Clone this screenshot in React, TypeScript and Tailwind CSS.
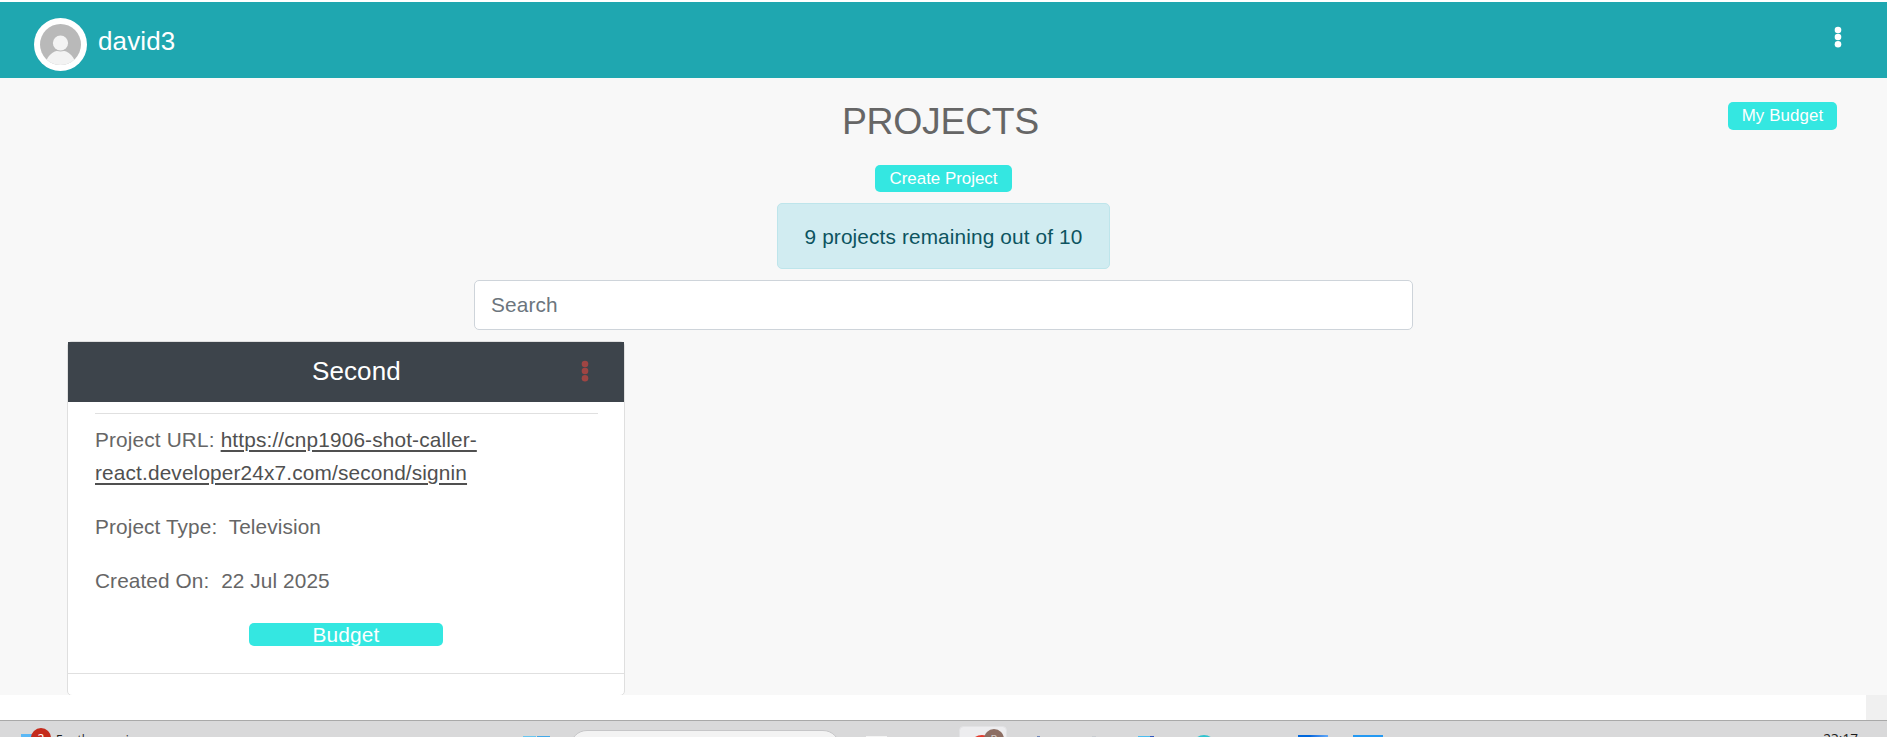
import React from "react";

function Dots({ className }: { className: string }) {
  return (
    <svg viewBox="0 0 8 22" className={`h-[22px] w-2 shrink-0 ${className}`} fill="currentColor">
      <circle cx="4" cy="4" r="3.3" />
      <circle cx="4" cy="11" r="3.3" />
      <circle cx="4" cy="18.2" r="3.3" />
    </svg>
  );
}

function Avatar() {
  return (
    <svg viewBox="0 0 53 53" className="size-[53px] shrink-0">
      <defs>
        <clipPath id="face">
          <circle cx="26.5" cy="26.5" r="20.5" />
        </clipPath>
      </defs>
      <circle cx="26.5" cy="26.5" r="26.5" fill="#fff" />
      <g clipPath="url(#face)">
        <rect width="53" height="53" fill="#b9b9b9" />
        <circle cx="26.5" cy="47.5" r="15" fill="#f3f3f3" />
        <circle cx="26.5" cy="25" r="8.6" fill="#b9b9b9" />
        <circle cx="26.5" cy="25" r="7.6" fill="#f3f3f3" />
      </g>
    </svg>
  );
}

function Header() {
  return (
    <header className="flex h-[76px] shrink-0 items-start bg-[#1fa7b0] pl-[34px] pr-[45px] text-white">
      <div className="pt-4">
        <Avatar />
      </div>
      <span className="ml-[11px] mt-[19px] text-[26px] leading-[40px] tracking-[0.12px]">david3</span>
      <Dots className="ml-auto mt-6 text-white" />
    </header>
  );
}

function ProjectCard() {
  return (
    <article className="ml-[67px] mt-[11px] h-[355px] w-[558px] shrink-0 rounded-[5px] border border-[#dfdfdf] bg-white">
      <div className="flex h-[60px] items-center bg-[#3d444b] pb-[2px] pr-[35px]">
        <h2 className="ml-[244px] text-[26px] leading-[40px] tracking-[0.1px] text-white">Second</h2>
        <Dots className="ml-auto text-[#9f4543]" />
      </div>
      <div className="pl-[27px] pr-[26px] text-[20.8px] leading-[33px] tracking-[0.15px] text-[#666]">
        <hr className="mb-[9px] mt-[11px] border-[#e0e0e0]" />
        <p>
          Project URL:{" "}
          <a className="text-[#505050] underline decoration-2 underline-offset-[3px]">
            https://cnp1906-shot-caller-
            <br />
            react.developer24x7.com/second/signin
          </a>
        </p>
        <p className="mt-[21px] tracking-[0.1px]">Project Type:&nbsp; Television</p>
        <p className="mt-[21px] tracking-[0.1px]">Created On:&nbsp; 22 Jul 2025</p>
        <button className="ml-[154px] mt-[26px] flex h-[23px] w-[194px] items-center justify-center rounded-[5px] bg-[#34e7e1] text-[20.8px] leading-[23px] text-white">
          Budget
        </button>
      </div>
      <div className="mt-[27px] border-t border-[#e0e0e0]" />
    </article>
  );
}

function Taskbar() {
  return (
    <footer className="flex h-[17px] shrink-0 items-start overflow-hidden border-t border-[#a9a9a9] bg-[#d9d9da]">
      <svg className="ml-[20px] h-4 w-8 shrink-0" viewBox="0 0 32 16">
        <rect x="1" y="13" width="14" height="3" fill="#5bb8f5" />
        <circle cx="21" cy="17" r="10" fill="#c42b1c" />
        <text x="21" y="22" fontSize="12" fill="#fff" textAnchor="middle" fontFamily="Noto Sans">
          2
        </text>
      </svg>
      <span className="ml-[4px] mt-[11px] w-[110px] shrink-0 whitespace-nowrap font-['Open_Sans',sans-serif] text-[12px] leading-4 text-[#1c1c1c]">
        For the evening
      </span>
      <div className="ml-[357px] mt-[15px] h-1 w-[13px] shrink-0 bg-[#69c6f0]" />
      <div className="ml-px mt-[15px] h-1 w-[13px] shrink-0 bg-[#43a8e8]" />
      <div className="ml-[20px] mt-[9px] h-[34px] w-[270px] shrink-0 rounded-full border border-[#c6c6c8] bg-[#f3f3f3]" />
      <div className="ml-[26px] mt-[15px] h-1 w-[21px] shrink-0 bg-[#f4f4f4]" />
      <svg className="ml-[72px] h-4 w-[48px] shrink-0" viewBox="0 0 48 16">
        <rect x=".5" y="5.5" width="47" height="30" rx="4" fill="#ededef" stroke="#e2e2e4" />
        <circle cx="23" cy="27" r="13" fill="#e33b2e" />
        <circle cx="35" cy="18" r="10" fill="#8d6e63" />
        <text x="35" y="22" fontSize="11" fill="#d5cbc7" textAnchor="middle" fontFamily="Noto Sans">
          R
        </text>
      </svg>
      <div className="ml-[30px] mt-[15px] h-1 w-[3px] shrink-0 bg-[#7187b8]" />
      <div className="ml-[52px] mt-[15px] h-1 w-[4px] shrink-0 bg-[#c9ccd0]" />
      <div className="ml-[42px] mt-[15px] h-1 w-[12px] shrink-0 bg-[#4cbdf0]" />
      <div className="mt-[15px] h-1 w-[4px] shrink-0 bg-[#3157bd]" />
      <div className="ml-[38px] mt-[14px] size-[24px] shrink-0 rounded-full bg-[#30c3cf]" />
      <div className="ml-[82px] mt-[14px] h-2 w-[30px] shrink-0 bg-linear-to-r from-[#0067dc] from-40% to-[#61a9f8]" />
      <div className="ml-[25px] mt-[14px] h-2 w-[30px] shrink-0 bg-[#2499f2]" />
      <span className="ml-auto mr-[29px] mt-[10px] shrink-0 font-['Open_Sans',sans-serif] text-[13.6px] leading-4 text-[#1c1c1c]">
        23:17
      </span>
    </footer>
  );
}

export default function App() {
  return (
    <div className="flex h-[737px] w-[1887px] flex-col overflow-hidden bg-white pt-[2px] font-['Liberation_Sans',Arial,sans-serif]">
      <Header />
      <main className="flex h-[617px] shrink-0 flex-col overflow-hidden bg-[#f8f8f8]">
        <div className="grid h-[87px] shrink-0 grid-cols-[1fr_auto_1fr] items-start">
          <h1 className="col-start-2 mt-[23px] -translate-x-[3px] text-[37.4px] leading-[40px] tracking-[-0.3px] text-[#666]">
            PROJECTS
          </h1>
          <button className="mr-[50px] mt-6 h-7 w-[109px] justify-self-end rounded-[5px] bg-[#34e7e1] pb-px text-[16.9px] leading-[27px] tracking-[0.1px] text-white">
            My Budget
          </button>
        </div>
        <div className="flex shrink-0 flex-col items-center">
          <button className="h-[27px] w-[137px] rounded-[5px] bg-[#34e7e1] text-[16.9px] leading-[27px] text-white">
            Create Project
          </button>
          <div className="mt-[11px] flex h-[66px] w-[333px] items-center justify-center rounded-[5px] border border-[#bee5eb] bg-[#d1ecf1] text-[20.8px] leading-[33px] tracking-[0.13px] text-[#0c5460]">
            9 projects remaining out of 10
          </div>
          <input
            className="mt-[11px] h-[50px] w-[939px] rounded-[5px] border border-[#ced4da] bg-white px-4 text-[20.8px] tracking-[0.15px] text-[#495057] placeholder:text-[#6c757d]"
            placeholder="Search"
          />
        </div>
        <ProjectCard />
      </main>
      <div className="flex h-[25px] shrink-0 justify-end bg-white">
        <div className="w-[21px] bg-[#f0f0f0]" />
      </div>
      <Taskbar />
    </div>
  );
}
